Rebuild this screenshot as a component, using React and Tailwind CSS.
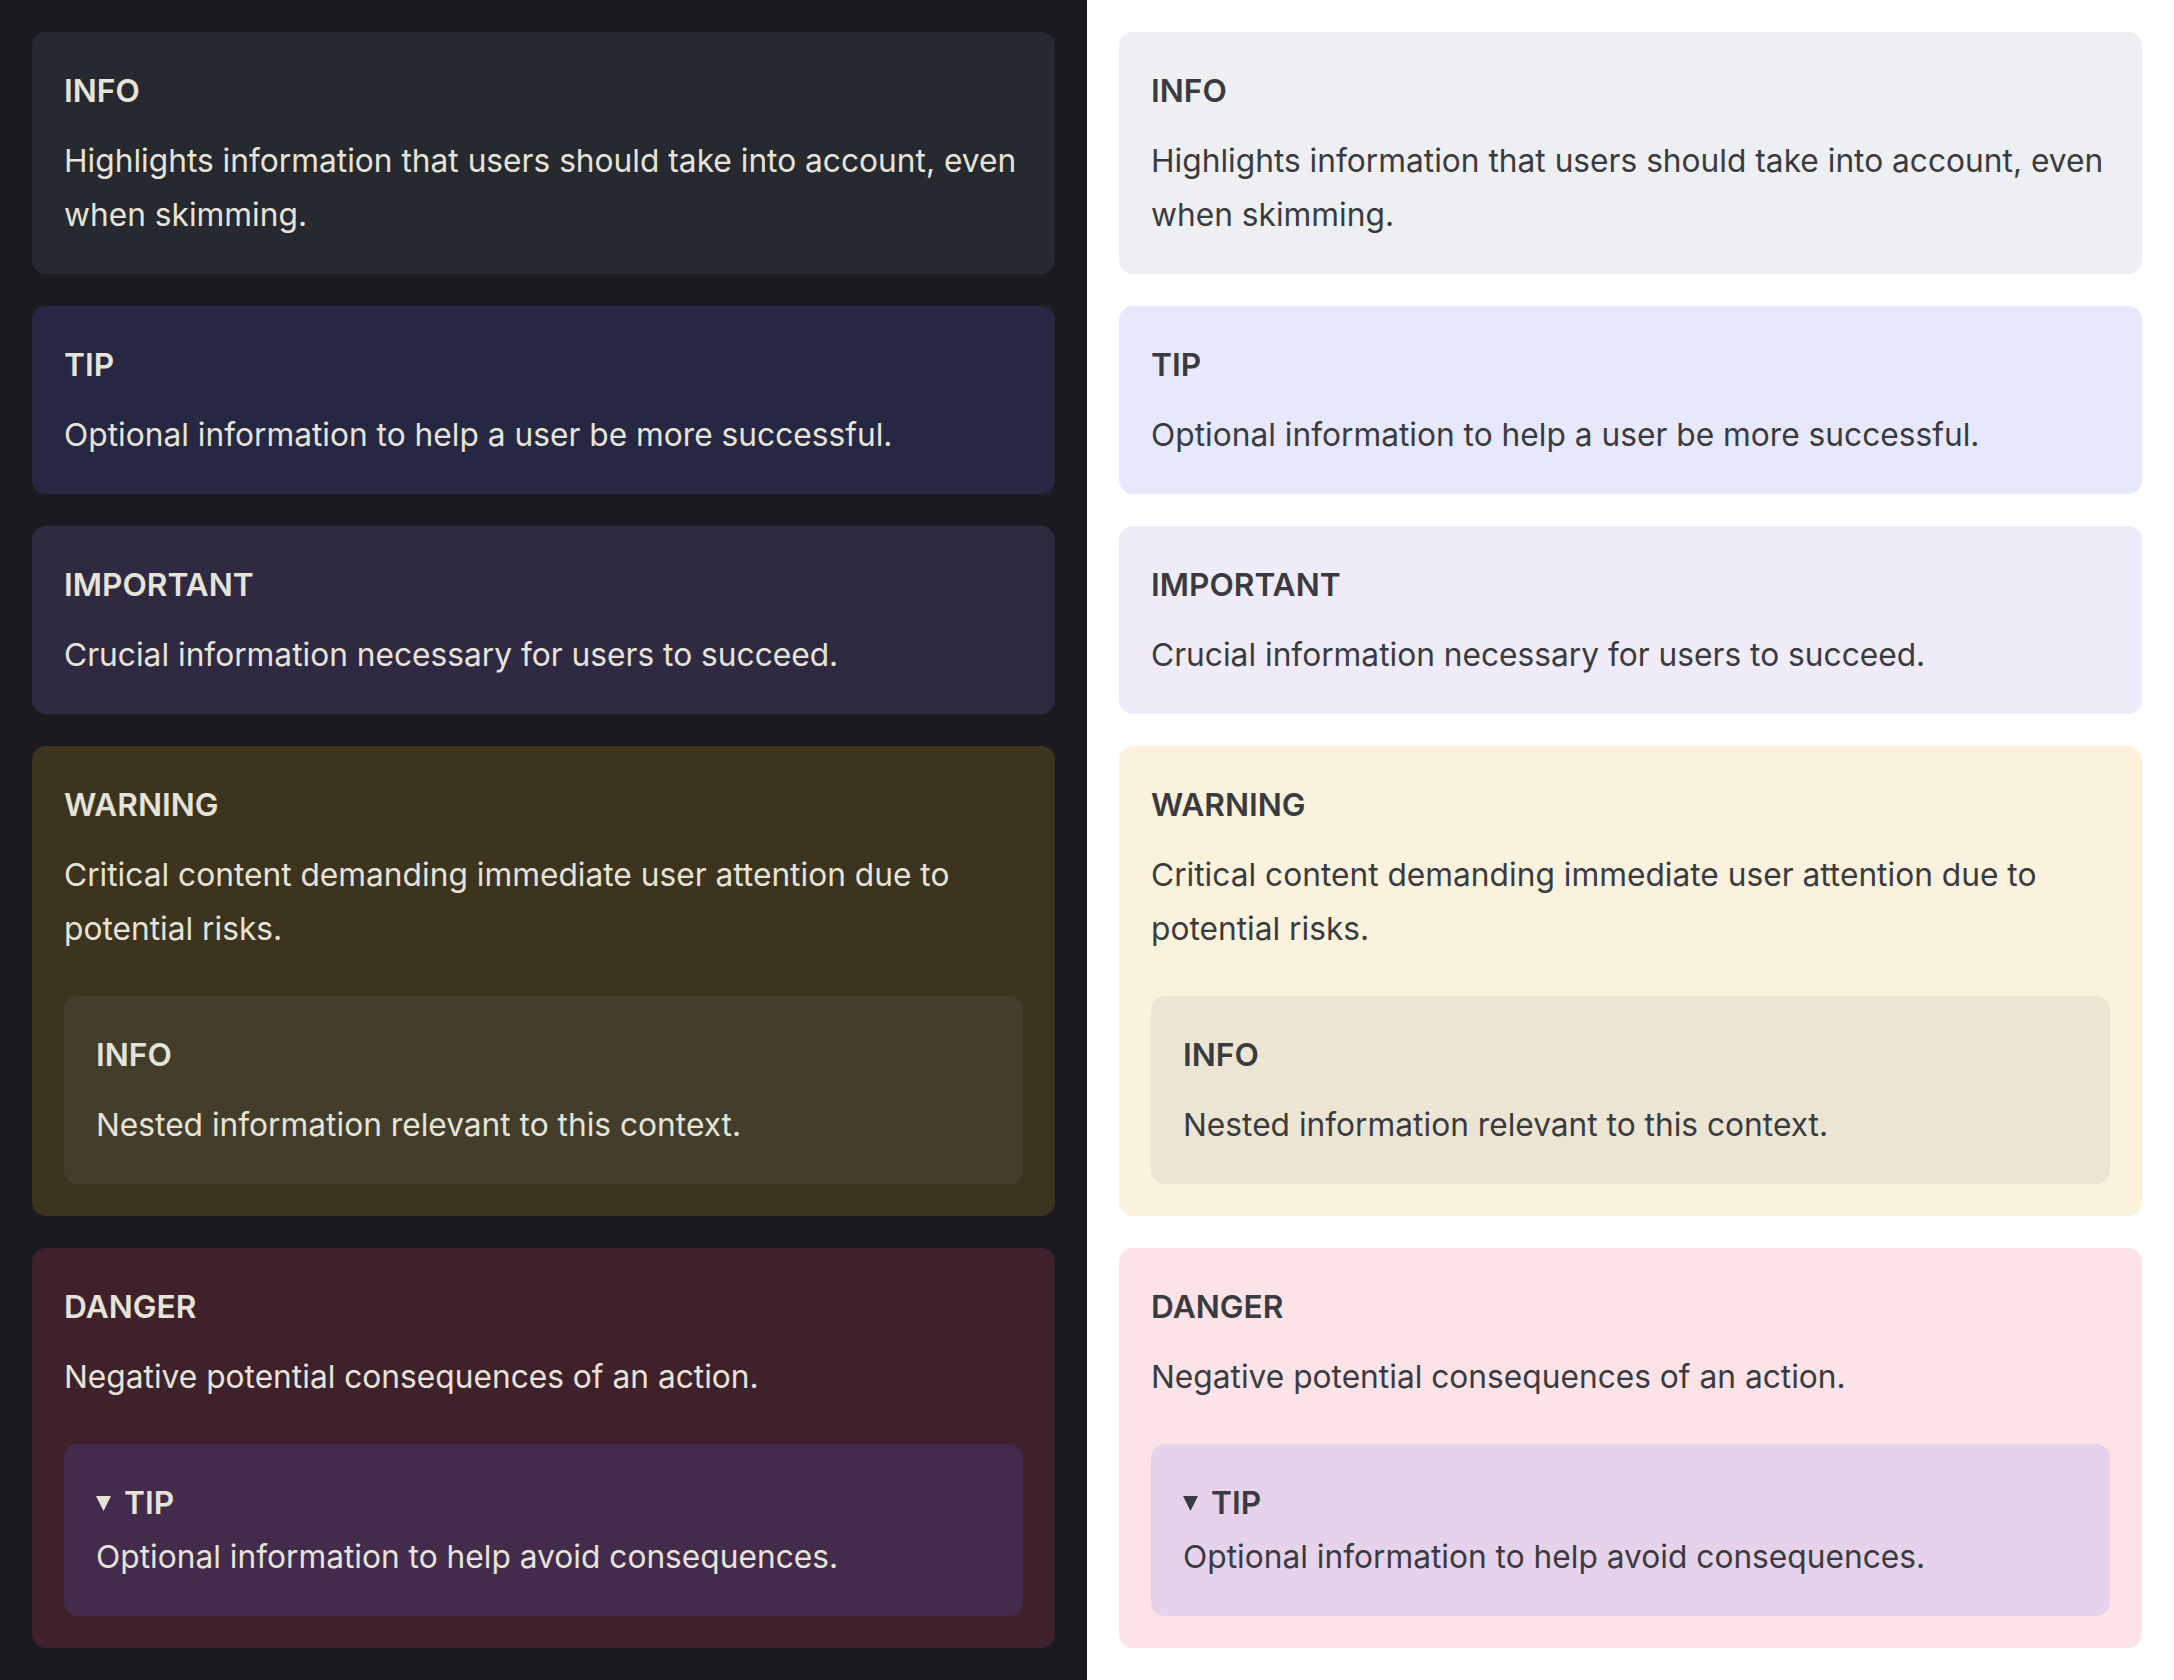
import React from 'react';

const dark = {
  panel: 'bg-[#1b1b1f] text-[#e6e3d8]',
  info: 'bg-[#262930]',
  tip: 'bg-[#262843]',
  important: 'bg-[#2f2a42]',
  warning: 'bg-[#3c341f]',
  danger: 'bg-[#3e212b]',
  nestedInfo: 'bg-[#433d2c]',
  nestedTip: 'bg-[#432b4b]',
  fill: '#e6e3d8',
};

const light = {
  panel: 'bg-white text-[#3a3b40]',
  info: 'bg-[#eeeff3]',
  tip: 'bg-[#e8e8fc]',
  important: 'bg-[#efebf9]',
  warning: 'bg-[#fbf2dd]',
  danger: 'bg-[#fce3e8]',
  nestedInfo: 'bg-[#ede5d4]',
  nestedTip: 'bg-[#e6d2ea]',
  fill: '#3a3b40',
};

function Callout({ bg, title, children, className = '' }) {
  return (
    <div className={`${bg} rounded-[14px] p-8 ${className}`}>
      <div className="font-semibold leading-[54px]">{title}</div>
      <div className="mt-4">{children}</div>
    </div>
  );
}

function Triangle({ fill }) {
  return (
    <svg width="15" height="15" viewBox="0 0 15 15" className="inline-block mr-[13px] align-[3px]">
      <path d="M0 0 L15 0 L7.5 15 Z" fill={fill} />
    </svg>
  );
}

function Panel({ theme }) {
  return (
    <div className={`${theme.panel} p-8 flex flex-col gap-8`}>
      <Callout bg={theme.info} title="INFO">
        <p>Highlights information that users should take into account, even when skimming.</p>
      </Callout>

      <Callout bg={theme.tip} title="TIP">
        <p>Optional information to help a user be more successful.</p>
      </Callout>

      <Callout bg={theme.important} title="IMPORTANT">
        <p>Crucial information necessary for users to succeed.</p>
      </Callout>

      <Callout bg={theme.warning} title="WARNING">
        <p>Critical content demanding immediate user attention due to potential risks.</p>
        <Callout bg={theme.nestedInfo} title="INFO" className="mt-10">
          <p>Nested information relevant to this context.</p>
        </Callout>
      </Callout>

      <Callout bg={theme.danger} title="DANGER">
        <p>Negative potential consequences of an action.</p>
        {/* collapsible tip, shown open */}
        <div className={`${theme.nestedTip} rounded-[14px] p-8 mt-10`}>
          <div className="font-semibold leading-[54px]">
            <Triangle fill={theme.fill} />
            TIP
          </div>
          <p>Optional information to help avoid consequences.</p>
        </div>
      </Callout>
    </div>
  );
}

export default function App() {
  return (
    <div className="grid grid-cols-2 min-h-[1680px] font-['Inter',sans-serif] text-[31.7px] leading-[54px]">
      <Panel theme={dark} />
      <Panel theme={light} />
    </div>
  );
}
